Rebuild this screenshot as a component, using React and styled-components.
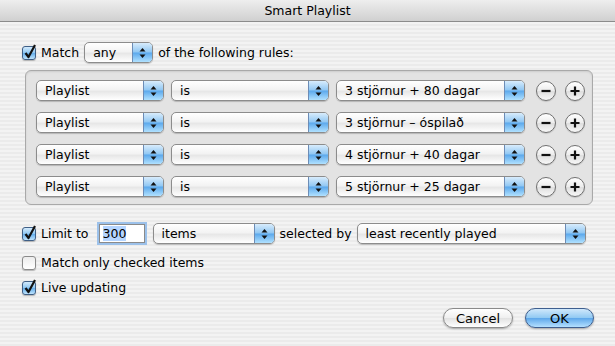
import styled, { createGlobalStyle } from "styled-components";

const GlobalStyle = createGlobalStyle`
  html, body { margin: 0; padding: 0; }
  body {
    font-family: "DejaVu Sans", "Lucida Grande", sans-serif;
    font-size: 12.5px;
    color: #000;
  }
`;

const rules = [
  "3 stjörnur + 80 dagar",
  "3 stjörnur – óspilað",
  "4 stjörnur + 40 dagar",
  "5 stjörnur + 25 dagar",
];

const Window = styled.div`
  width: 615px;
  height: 346px;
  display: flex;
  flex-direction: column;
  background: repeating-linear-gradient(#ebebeb 0 2px, #f3f3f3 2px 4px);
  overflow: hidden;
`;

const TitleBar = styled.div`
  height: 21px;
  flex: none;
  display: flex;
  align-items: center;
  justify-content: center;
  background: linear-gradient(#eeeeee, #d0d0d0);
  border-bottom: 1px solid #8c8c8c;
  font-size: 12.5px;
`;

const Body = styled.div`
  flex: 1;
  display: flex;
  flex-direction: column;
  padding: 20px 21px 0 22px;
`;

const Row = styled.div`
  display: flex;
  align-items: center;
  height: 21px;
  gap: 5px;
  margin-top: ${(p) => p.$mt || 0}px;
`;

const Box = styled.div`
  margin: 7px 0 0 3px;
  width: 568px;
  box-sizing: border-box;
  padding: 9px 0 7px 10px;
  display: flex;
  flex-direction: column;
  gap: 11px;
  background: #e3e3e3;
  border: 1px solid #a9a9a9;
  border-radius: 6px;
  box-shadow: inset 0 1px 2px rgba(0, 0, 0, 0.1);
`;

const RuleRow = styled.div`
  display: flex;
  align-items: center;
  height: 21px;
  gap: 7px;
`;

const Check = styled.span`
  width: 14px;
  height: 14px;
  flex: none;
  box-sizing: border-box;
  border: 1px solid ${(p) => (p.$on ? "#3f5f86" : "#8a8a8a")};
  border-radius: 3px;
  background: ${(p) =>
    p.$on
      ? "linear-gradient(#d3eafc, #8cc6f2 50%, #62acea 51%, #bfe4fd)"
      : "linear-gradient(#ececec, #ffffff)"};
  box-shadow: 0 1px 1px rgba(0, 0, 0, 0.25);
  position: relative;
  svg { position: absolute; left: 0px; top: -4px; }
`;

const CheckLabel = styled.label`
  display: flex;
  align-items: center;
  gap: 5px;
`;

const Popup = styled.div`
  width: ${(p) => p.$w}px;
  height: 21px;
  flex: none;
  box-sizing: border-box;
  display: flex;
  border: 1px solid #8c8c8c;
  border-radius: 5px;
  background: linear-gradient(#ffffff, #f3f3f3 45%, #e7e7e7 55%, #ffffff);
  box-shadow: 0 1px 1px rgba(0, 0, 0, 0.2);
  overflow: hidden;
`;

const PopupText = styled.span`
  flex: 1;
  padding-left: 8px;
  line-height: 19px;
  white-space: nowrap;
  overflow: hidden;
`;

const Arrows = styled.span`
  width: 19px;
  flex: none;
  display: flex;
  align-items: center;
  justify-content: center;
  border-left: 1px solid #6c8cb6;
  background: linear-gradient(#d8ecfc, #90c7f3 48%, #5ba8ec 52%, #b0e1ff);
`;

const RoundBtn = styled.span`
  width: 20px;
  height: 20px;
  flex: none;
  box-sizing: border-box;
  border: 1px solid #707070;
  border-radius: 50%;
  background: linear-gradient(#ffffff, #ececec 50%, #dedede 51%, #f8f8f8);
  box-shadow: 0 1px 1px rgba(0, 0, 0, 0.15);
  display: flex;
  align-items: center;
  justify-content: center;
  margin-left: ${(p) => p.$ml}px;
`;

const TextField = styled.div`
  width: 46px;
  height: 19px;
  box-sizing: border-box;
  border: 1px solid #8a8a8a;
  background: #fff;
  box-shadow: 0 0 0 2px #9cc1ea;
  padding: 1px 3px;
  margin: 0 3px 0 5px;
  line-height: 16px;
  span { background: #b5d5ff; }
`;

const Footer = styled.div`
  display: flex;
  justify-content: flex-end;
  gap: 12px;
  margin-top: 10px;
`;

const Button = styled.span`
  width: ${(p) => p.$w}px;
  height: 20px;
  box-sizing: border-box;
  border: 1px solid ${(p) => (p.$primary ? "#3f5f8f" : "#8a8a8a")};
  border-radius: 10px;
  display: flex;
  align-items: center;
  justify-content: center;
  font-size: 13px;
  background: ${(p) =>
    p.$primary
      ? "linear-gradient(#d0e8fb, #92caf3 48%, #5fa8ea 52%, #b4e0ff)"
      : "linear-gradient(#ffffff, #f0f0f0 48%, #e2e2e2 52%, #ffffff)"};
  box-shadow: 0 1px 2px rgba(0, 0, 0, 0.3);
`;

const CheckMark = () => (
  <svg width="14" height="17" viewBox="0 0 14 17">
    <path d="M2.5 10 L5.5 14 L12 2" fill="none" stroke="#111" strokeWidth="2.2" strokeLinejoin="round" />
  </svg>
);

const UpDown = () => (
  <svg width="7" height="12" viewBox="0 0 7 12">
    <path d="M3.5 1 L6.5 4.5 L0.5 4.5 Z" fill="#111" />
    <path d="M3.5 11 L6.5 7.5 L0.5 7.5 Z" fill="#111" />
  </svg>
);

const Select = ({ w, children }) => (
  <Popup $w={w}>
    <PopupText>{children}</PopupText>
    <Arrows>
      <UpDown />
    </Arrows>
  </Popup>
);

const Minus = () => (
  <svg width="12" height="12" viewBox="0 0 12 12">
    <path d="M1.5 6 H10.5" stroke="#111" strokeWidth="2.2" />
  </svg>
);

const Plus = () => (
  <svg width="12" height="12" viewBox="0 0 12 12">
    <path d="M1.5 6 H10.5 M6 1.5 V10.5" stroke="#111" strokeWidth="2.2" />
  </svg>
);

export default function App() {
  return (
    <Window>
      <GlobalStyle />
      <TitleBar>Smart Playlist</TitleBar>
      <Body>
        <Row>
          <CheckLabel>
            <Check $on>
              <CheckMark />
            </Check>
            Match
          </CheckLabel>
          <Select w={69}>any</Select>
          of the following rules:
        </Row>
        <Box>
          {rules.map((r) => (
            <RuleRow key={r}>
              <Select w={128}>Playlist</Select>
              <Select w={158}>is</Select>
              <Select w={189}>{r}</Select>
              <RoundBtn $ml={4}>
                <Minus />
              </RoundBtn>
              <RoundBtn $ml={2}>
                <Plus />
              </RoundBtn>
            </RuleRow>
          ))}
        </Box>
        <Row $mt={18}>
          <CheckLabel>
            <Check $on>
              <CheckMark />
            </Check>
            Limit to
          </CheckLabel>
          <TextField>
            <span>300</span>
          </TextField>
          <Select w={122}>items</Select>
          selected by
          <Select w={229}>least recently played</Select>
        </Row>
        <Row $mt={8}>
          <CheckLabel>
            <Check />
            Match only checked items
          </CheckLabel>
        </Row>
        <Row $mt={4}>
          <CheckLabel>
            <Check $on>
              <CheckMark />
            </Check>
            Live updating
          </CheckLabel>
        </Row>
        <Footer>
          <Button $w={70}>Cancel</Button>
          <Button $w={69} $primary>
            OK
          </Button>
        </Footer>
      </Body>
    </Window>
  );
}
